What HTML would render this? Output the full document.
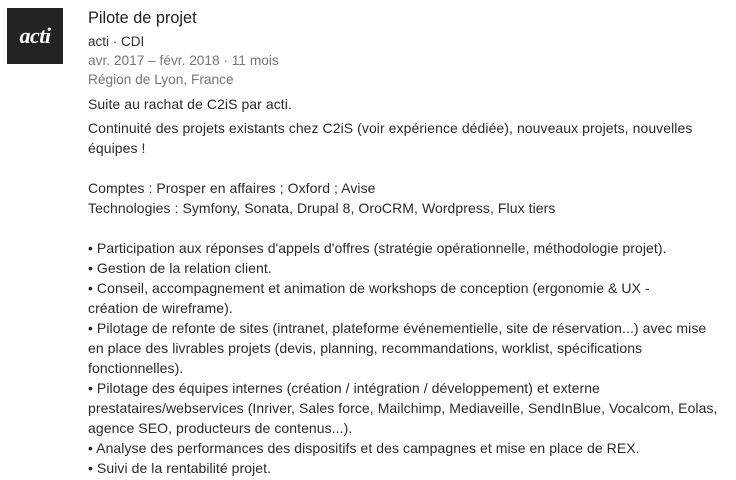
<!DOCTYPE html>
<html><head><meta charset="utf-8"><style>
body{margin:0;background:#fff;width:736px;height:480px;overflow:hidden;font-family:"Liberation Sans",sans-serif;}
.logo{position:absolute;left:7px;top:8px;width:56px;height:56px;background:#232323;color:#fff;font:italic bold 22px "Liberation Serif",serif;display:flex;align-items:center;justify-content:center;letter-spacing:-0.5px}
.t{position:absolute;left:88px;white-space:nowrap}
.title{top:9px;font-size:16.3px;color:#222;}
.sub{top:34px;font-size:13.5px;color:#333}
.g{font-size:13.7px;color:#777}
.body{position:absolute;left:88px;top:94px;width:660px;font-size:14px;letter-spacing:0.07px;line-height:20px;color:#2a2a2a;white-space:nowrap}
</style></head><body>
<div class="logo">acti</div>
<div class="t title">Pilote de projet</div>
<div class="t sub">acti · CDI</div>
<div class="t g" style="top:53px">avr. 2017 – févr. 2018 · 11 mois</div>
<div class="t g" style="top:72px">Région de Lyon, France</div>
<div class="body">Suite au rachat de C2iS par acti.<br>
<div style="margin-top:4px">Continuité des projets existants chez C2iS (voir expérience dédiée), nouveaux projets, nouvelles<br>équipes !<br><br>
Comptes : Prosper en affaires ; Oxford ; Avise<br>
Technologies : Symfony, Sonata, Drupal 8, OroCRM, Wordpress, Flux tiers<br><br>
• Participation aux réponses d'appels d'offres (stratégie opérationnelle, méthodologie projet).<br>
• Gestion de la relation client.<br>
• Conseil, accompagnement et animation de workshops de conception (ergonomie &amp; UX -<br>création de wireframe).<br>
• Pilotage de refonte de sites (intranet, plateforme événementielle, site de réservation...) avec mise<br>en place des livrables projets (devis, planning, recommandations, worklist, spécifications<br>fonctionnelles).<br>
• Pilotage des équipes internes (création / intégration / développement) et externe<br>prestataires/webservices (Inriver, Sales force, Mailchimp, Mediaveille, SendInBlue, Vocalcom, Eolas,<br>agence SEO, producteurs de contenus...).<br>
• Analyse des performances des dispositifs et des campagnes et mise en place de REX.<br>
• Suivi de la rentabilité projet.</div></div>
</body></html>
